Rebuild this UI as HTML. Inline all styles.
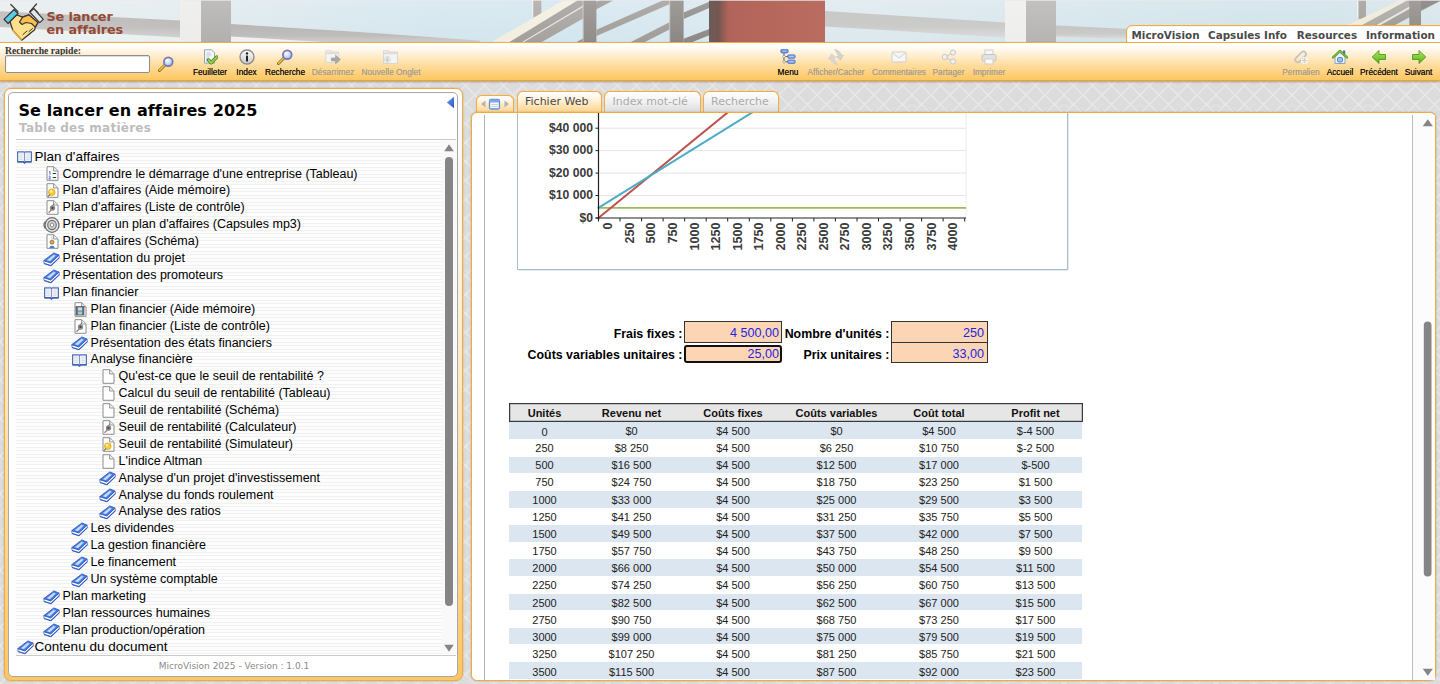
<!DOCTYPE html>
<html lang="fr"><head><meta charset="utf-8"><title>Se lancer en affaires 2025</title>
<style>
*{box-sizing:border-box}
html,body{margin:0;padding:0;width:1440px;height:684px;overflow:hidden}
body{background:#dcdcdc;font-family:"Liberation Sans",sans-serif;position:relative}
.abs{position:absolute}
svg{display:block}
#bg{left:0;top:0;width:1440px;height:684px}
#banner{left:0;top:0;width:1440px;height:43px;overflow:hidden}
#logo1,#logo2{left:46.5px;font:bold 12.8px/14px "DejaVu Sans","Liberation Sans",sans-serif;color:#954935;white-space:nowrap;letter-spacing:-.1px}
#logo1{top:9.700px}#logo2{top:22.700px}
#topmenu{left:1126px;top:25px;width:320px;height:19px;background:#fff;border:1px solid #f5a93b;border-radius:6px 0 0 0;box-shadow:inset 0 0 1px #f5a93b}
#topmenu span{position:absolute;top:2.5px;font:bold 10.4px/13px "DejaVu Sans","Liberation Sans",sans-serif;color:#444;white-space:nowrap}
#toolbar{left:0;top:42px;width:1440px;height:39px;border-top:1px solid #f6ab3c;border-bottom:1px solid #f5a21e;background:linear-gradient(#fff 0%,#fff 6%,#fff0d6 30%,#fedc9e 60%,#fdc761 100%);box-shadow:0 1px 2px rgba(0,0,0,.3)}
#qs{left:5px;top:44.5px;font:bold 9.7px/11px "Liberation Serif",serif;color:#333;white-space:nowrap}
#qsin{left:5px;top:55px;width:145px;height:18px;background:#fff;border:1px solid #8e8e8e;border-radius:2px;box-shadow:inset 0 1px 1px rgba(0,0,0,.15)}
.tb{position:absolute;top:67px;font:8.3px/10px "Liberation Sans",sans-serif;color:#111;white-space:nowrap;transform:translateX(-50%);text-shadow:0 0 .6px rgba(0,0,0,.8)}
.tb.dis{color:#a5a199;text-shadow:0 0 .5px rgba(150,140,125,.7)}
.ti{position:absolute;top:49px;width:16px;height:16px;transform:translateX(-50%)}
/* left panel */
#lp{left:4px;top:88px;width:459px;height:593px;border:1px solid #f6a93a;border-radius:7px;background:linear-gradient(#fff 0%,#fff6e6 25%,#fee3b0 60%,#fdc763 100%);box-shadow:0 0 2px rgba(120,120,120,.5)}
#lpi{left:8px;top:92px;width:450px;height:585px;border:1px solid #a9a9a9;border-radius:5px;background:#fff;overflow:hidden}
#ttl{left:18.400px;top:100.700px;font:bold 16px/20px "DejaVu Sans","Liberation Sans",sans-serif;color:#000;white-space:nowrap;letter-spacing:.1px}
#sub{left:19px;top:121px;font:bold 12px/14px "DejaVu Sans","Liberation Sans",sans-serif;color:#bdbdbd;white-space:nowrap;letter-spacing:.25px}
#stripes{left:16px;top:140px;width:426px;height:514px;background:repeating-linear-gradient(#fdfdfd 0,#fdfdfd 2.200px,#f1f1f1 2.200px,#f1f1f1 3.500px)}
#sbar{left:442px;top:140px;width:15px;height:514px;background:#f9f9f9}
.hr{left:16px;width:440px;height:1px;background:#cbcbcb}
.row{position:absolute;height:17px;line-height:17px;font-size:12.5px;color:#000;white-space:nowrap}
.row.l0{font-size:13.5px}
.ic{position:absolute}
#foot{left:10px;top:661.300px;width:448px;text-align:center;font:9px/11px "DejaVu Sans","Liberation Sans",sans-serif;color:#8a8a8a}
/* right panel */
#rp{left:471px;top:112px;width:965px;height:569px;border:1px solid #f6a93a;border-radius:6px;background:#fff;box-shadow:0 0 2px rgba(120,120,120,.5);overflow:hidden}
.tab{position:absolute;border:1px solid #f6ab3f;border-bottom:none;border-radius:6px 6px 0 0;font:11px/14px "DejaVu Sans","Liberation Sans",sans-serif;white-space:nowrap;box-shadow:0 0 1px #f6ab3f}
.tab.on{background:linear-gradient(#fff 0%,#fff3dd 35%,#fdd185 100%);color:#4a4a4a}
.tab.off{background:linear-gradient(#fff 0%,#f0f0f0 50%,#dadada 100%);color:#aaa}
.tab span{position:absolute;left:0;right:0;text-align:center}
.fld{position:absolute;background:#fcd5b4;border:1px solid #333;font-size:12.6px;color:#2424e2;text-align:right;white-space:nowrap}
.lbl{position:absolute;font:bold 12.4px/14px "Liberation Sans",sans-serif;color:#000;white-space:nowrap;text-align:right}
.th{position:absolute;top:407px;font:bold 11px/13px "Liberation Sans",sans-serif;color:#111;transform:translateX(-50%);white-space:nowrap}
.tr{position:absolute;left:509px;width:573px}
.tr.z{background:#dce6f1}
.td{position:absolute;font:11px/13px "Liberation Sans",sans-serif;color:#222;transform:translateX(-50%);white-space:nowrap}
</style></head><body>
<svg id="bg" class="abs" width="1440" height="684"><defs>
<pattern id="pt" width="38" height="38" patternUnits="userSpaceOnUse">
<rect width="38" height="38" fill="#dcdcdc"/>
<path d="M0 0L38 38M38 0L0 38M19 0L38 19M0 19L19 38M19 0L0 19M38 19L19 38" stroke="#e9e9e9" stroke-width="1.300" fill="none"/>
<path d="M0 12Q19 -6 38 12M0 28Q19 46 38 28" stroke="#e3e3e3" stroke-width="1" fill="none"/>
</pattern></defs><rect width="1440" height="684" fill="url(#pt)"/></svg>
<svg id="banner" class="abs" width="1440" height="43" viewBox="0 0 1440 43">
<defs>
<linearGradient id="sky" x1="0" x2="1"><stop offset="0" stop-color="#e4eaeb"/><stop offset=".12" stop-color="#e2ebee"/><stop offset=".26" stop-color="#d6e6ee"/><stop offset=".37" stop-color="#d2e5ef"/><stop offset=".6" stop-color="#dde9ee"/><stop offset=".75" stop-color="#d5e5ec"/><stop offset=".9" stop-color="#d0e2ea"/><stop offset="1" stop-color="#d6e4e9"/></linearGradient>
<linearGradient id="redc" x1="0" x2="1"><stop offset="0" stop-color="#6a5d5a"/><stop offset=".08" stop-color="#745650"/><stop offset=".17" stop-color="#b2645a"/><stop offset="1" stop-color="#ba6c60"/></linearGradient>
<linearGradient id="fade" x1="0" x2="0" y1="0" y2="1"><stop offset="0" stop-color="#fff" stop-opacity=".18"/><stop offset="1" stop-color="#fff" stop-opacity="0"/></linearGradient>
<linearGradient id="bm" x1="0" x2="0" y1="0" y2="1"><stop offset="0" stop-color="#b1b0af"/><stop offset=".6" stop-color="#bcbbba"/><stop offset="1" stop-color="#d2d1d0"/></linearGradient>
<linearGradient id="bm2" x1="0" x2="0" y1="0" y2="1"><stop offset="0" stop-color="#c0c0bf"/><stop offset=".6" stop-color="#c8c8c7"/><stop offset="1" stop-color="#dadbdb"/></linearGradient>
<linearGradient id="wl" x1="0" x2="1"><stop offset="0" stop-color="#fff" stop-opacity=".12"/><stop offset="1" stop-color="#fff" stop-opacity="0"/></linearGradient>
</defs>
<rect width="1440" height="43" fill="url(#sky)"/>
<rect x="0" y="26" width="180" height="17" fill="#eaf0f1"/>
<!-- left beam -->
<polygon points="0,11.300 180,20.500 180,37.500 0,27" fill="url(#bm)"/>
<polygon points="231,24 360,32 480,40.500 480,43 231,43" fill="#eef1f1"/>
<polygon points="231,24 360,32 480,40.500 480,43 340,43 231,36.500" fill="url(#bm)"/>
<!-- left column -->
<rect x="180" y="0" width="22" height="43" fill="#ecedeb"/>
<rect x="201" y="0" width="30" height="43" fill="#b1b0af"/>
<rect x="0" y="0" width="180" height="43" fill="url(#wl)"/>
<!-- structure middle -->
<rect x="532" y="0" width="1.500" height="17" fill="#eef0ee"/>
<rect x="533.300" y="0" width="8" height="17.500" fill="#aba6a3"/>
<polygon points="489.900,43 563.900,0 578.300,0 507.900,43" fill="#f3eedf"/>
<polygon points="507.900,43 578.300,0 584,0 584,5 520.600,43" fill="#a29e9a"/>
<polygon points="520.600,43 584,5 584,6.500 522.500,43" fill="#e4e1da"/>
<polygon points="522.500,43 584,6.500 584,18 540,43" fill="#a5a19d"/>
<polygon points="574.700,43 584,38 584,43" fill="#9a9692"/>
<polygon points="596,2 600,0 614,0 596,9.500" fill="#97938f"/>
<polygon points="596.400,29.800 661.400,.900 663,0 671,0 671,3.400 596.400,36.100" fill="#a09c98"/>
<polygon points="628.900,43 670.400,21.700 670.400,28.900 643,43" fill="#a09c98"/>
<polygon points="683.600,12.600 709.300,1.800 709.300,8.100 683.600,19" fill="#8d8885"/>
<polygon points="683.600,38.800 709.300,28.900 709.300,35.200 690,43 683.600,43" fill="#8d8885"/>
<rect x="582.600" y="0" width="1.200" height="43" fill="#c9c7c3"/>
<rect x="583.600" y="0" width="12.800" height="43" fill="#908b88"/>
<rect x="669.200" y="0" width="1.200" height="43" fill="#c4c1bd"/>
<rect x="670.200" y="0" width="13.400" height="43" fill="#8b8683"/>
<!-- right beam -->
<polygon points="825,11 1005,22.500 1005,37.500 825,26.500" fill="url(#bm2)"/>
<rect x="1005" y="0" width="22" height="43" fill="#eeeeec"/>
<rect x="1026" y="0" width="30" height="43" fill="#b5b4b3"/>
<polygon points="1056,25.500 1130,29 1130,39 1056,36.500" fill="url(#bm2)"/>
<!-- far right structure -->
<rect x="1357" y="0" width="1.500" height="18" fill="#f1f1ee"/>
<rect x="1358.500" y="0" width="7.500" height="19" fill="#a09c97"/>
<polygon points="1347.600,25 1401,0 1408,0 1362.200,25" fill="#efe9d9"/>
<polygon points="1362.200,25 1408,0 1421.500,0 1376.800,25" fill="#a9a6a1"/>
<polygon points="1376.800,25 1421.500,0 1425.400,0 1380.700,25" fill="#e6e3da"/>
<polygon points="1380.700,25 1425.400,0 1440,0 1440,1 1395.200,25" fill="#9b9792"/>
<rect x="1409.300" y="0" width="11.700" height="25" fill="#8d8883"/>
<polygon points="1421,0 1440,0 1440,1 1421,10" fill="#7d7975"/>
<rect x="0" y="0" width="1440" height="43" fill="url(#fade)"/>
<!-- red column -->
<rect x="709" y="0" width="116" height="43" fill="url(#redc)"/>
<rect x="0" y="0" width="1440" height="1" fill="#e9eaf0" opacity=".7"/>
</svg>
<svg class="abs" style="left:0;top:0" width="48" height="43" viewBox="0 0 48 43">
<g stroke="#3a332f" stroke-width="1.200" stroke-linejoin="round" stroke-linecap="round">
<path d="M10.800 4.500L18 11.700M36.500 4L29.800 11.700M33.800 8.600L38 12.600" fill="none"/>
<polygon points="29.800,12.200 33.800,8.600 43.300,19.400 39.700,22.600" fill="#dfe9ec"/>
<path d="M16.700 14.900L22.600 17.100L28.900 14.900L37.900 22.600L35.200 27.100L34.700 29.800L21.700 40.200L12.600 29.800L9.900 21.200Z" fill="#fde08c"/>
<path d="M22.600 17.100L28.900 14.900L37.900 22.600L35.200 27.100L31.500 23.500L26 22.500L22 24.500L19.500 22Z" fill="#f8bf4c"/>
<polygon points="4,19.400 14,9.500 18,13.500 8.100,23.500" fill="#57cbe8"/>
<path d="M23 34.500l4 -3.500M26 37l4 -3.500M29 31.500l3.500 -3" fill="none" stroke-width="1"/>
<path d="M13 30.500l8 9" fill="none" stroke="#e9a93a" stroke-width="1.800" stroke-dasharray="1.500 1.500"/>
</g></svg>
<div id="logo1" class="abs">Se lancer</div><div id="logo2" class="abs">en affaires</div>
<div id="topmenu" class="abs"></div>
<div class="abs" style="left:1131.5px;top:29px;font:bold 10.4px/13px 'DejaVu Sans','Liberation Sans',sans-serif;color:#4a4a4a;white-space:nowrap">MicroVision</div>
<div class="abs" style="left:1208px;top:29px;font:bold 10.4px/13px 'DejaVu Sans','Liberation Sans',sans-serif;color:#4a4a4a;white-space:nowrap">Capsules Info</div>
<div class="abs" style="left:1296.8px;top:29px;font:bold 10.4px/13px 'DejaVu Sans','Liberation Sans',sans-serif;color:#4a4a4a;white-space:nowrap">Resources</div>
<div class="abs" style="left:1366px;top:29px;font:bold 10.4px/13px 'DejaVu Sans','Liberation Sans',sans-serif;color:#4a4a4a;white-space:nowrap">Information</div>
<div id="toolbar" class="abs"></div>
<div id="qs" class="abs">Recherche rapide:</div><div id="qsin" class="abs"></div>
<div class="ti" style="left:166px;top:56px"><svg viewBox="0 0 16 16"><defs><radialGradient id="mg" cx=".4" cy=".35" r=".7"><stop offset="0" stop-color="#fff"/><stop offset=".6" stop-color="#bcd9f6"/><stop offset="1" stop-color="#8fb4e6"/></radialGradient></defs><path d="M1.5 14.5L8 8" stroke="#8a6a1c" stroke-width="3" stroke-linecap="round"/><path d="M1.6 14.2L7.6 8.2" stroke="#e9c84a" stroke-width="1.6" stroke-linecap="round"/><circle cx="10.3" cy="5.7" r="4.4" fill="url(#mg)" stroke="#7d74b4" stroke-width="1.7"/></svg></div>
<div class="ti" style="left:210px"><svg viewBox="0 0 16 16"><path d="M2.5 .8h7l3 3v10.4h-10z" fill="#f4f7fb" stroke="#9aa3ad" stroke-width="1"/><path d="M4.5 4h4M4.5 6h5M4.5 8h3" stroke="#b9c7dd" stroke-width="1"/><rect x="4" y="9" width="3" height="4" fill="#bcd6f2"/><path d="M6.5 11l2.7 2.8L14.8 8" fill="none" stroke="#4e8a1e" stroke-width="3.4" stroke-linecap="round" stroke-linejoin="round"/><path d="M6.5 11l2.7 2.8L14.8 8" fill="none" stroke="#9fd54a" stroke-width="1.7" stroke-linecap="round" stroke-linejoin="round"/></svg></div><div class="tb" style="left:210px">Feuilleter</div>
<div class="ti" style="left:246.5px"><svg viewBox="0 0 16 16"><defs><linearGradient id="ig" x1="0" y1="0" x2="0" y2="1"><stop offset="0" stop-color="#fff"/><stop offset="1" stop-color="#c9c9c9"/></linearGradient></defs><circle cx="8" cy="8" r="7" fill="url(#ig)" stroke="#8a8a8a" stroke-width="1.3"/><circle cx="8" cy="4.4" r="1.2" fill="#222"/><rect x="7" y="6.5" width="2" height="6" rx=".6" fill="#222"/></svg></div><div class="tb" style="left:246.5px">Index</div>
<div class="ti" style="left:285px"><svg viewBox="0 0 16 16"><defs><radialGradient id="mg" cx=".4" cy=".35" r=".7"><stop offset="0" stop-color="#fff"/><stop offset=".6" stop-color="#bcd9f6"/><stop offset="1" stop-color="#8fb4e6"/></radialGradient></defs><path d="M1.5 14.5L8 8" stroke="#8a6a1c" stroke-width="3" stroke-linecap="round"/><path d="M1.6 14.2L7.6 8.2" stroke="#e9c84a" stroke-width="1.6" stroke-linecap="round"/><circle cx="10.3" cy="5.7" r="4.4" fill="url(#mg)" stroke="#7d74b4" stroke-width="1.7"/></svg></div><div class="tb" style="left:285px">Recherche</div>
<div class="ti" style="left:333px"><svg viewBox="0 0 16 16"><path d="M.800 1.700h5.200v1.300h7.700v10.300H.800z" fill="#f5f5f5" stroke="#d2d2d2" stroke-width=".800"/><rect x="1.200" y="3.200" width="12.100" height="2" fill="#dcdcdc"/><path d="M6.300 8.900h4.200V5.900l5 4.500-5 4.500v-3H6.300z" fill="#a6a6a6" stroke="#9a9a9a" stroke-width=".500"/></svg></div><div class="tb dis" style="left:333px">Désarrimez</div>
<div class="ti" style="left:391px"><svg viewBox="0 0 16 16"><path d="M.500 1.700h5.200v1.300h8.800v11.500H.500z" fill="#f3f3f3" stroke="#d0d0d0" stroke-width=".800"/><rect x=".900" y="3.200" width="13.200" height="2" fill="#dcdcdc"/><circle cx="4.300" cy="10.400" r="3" fill="#fff" stroke="#cfcfcf" stroke-width=".800"/><path d="M3.300 8.300h2v2h1.500l-2.500 2.700-2.500-2.700h1.500z" fill="#c9c9c9"/></svg></div><div class="tb dis" style="left:391px">Nouvelle Onglet</div>
<div class="ti" style="left:788px"><svg viewBox="0 0 16 16"><path d="M4 4v8.800H8M4 7.500H8" fill="none" stroke="#6a6a6a" stroke-width="1.100"/><rect x=".800" y=".400" width="7.400" height="3.600" rx="1.200" fill="#6c95e6" stroke="#4468c4" stroke-width=".700"/><rect x="7.600" y="5.800" width="7.600" height="3.500" rx="1.200" fill="#7da3ec" stroke="#4a6fc8" stroke-width=".700"/><rect x="7.600" y="11" width="7.600" height="3.500" rx="1.200" fill="#7da3ec" stroke="#4a6fc8" stroke-width=".700"/><path d="M2.300 2.200h4.400M9.300 7.500h4.200M9.300 12.700h4.200" stroke="#b9d0f7" stroke-width=".900"/><circle cx="4" cy="7.500" r="1.300" fill="#fff" stroke="#8a8a8a" stroke-width=".700"/><circle cx="4" cy="12.800" r="1.300" fill="#fff" stroke="#8a8a8a" stroke-width=".700"/></svg></div><div class="tb" style="left:788px">Menu</div>
<div class="ti" style="left:836px"><svg viewBox="0 0 16 16"><path id="afa" d="M6.500 .500C10 1 13 3.500 13.500 6.500L15.600 6 12.500 11 8.400 7.600 10.500 7.200C10 5 8.500 3 6.500 .500z" fill="#d2d2d2" stroke="#bdbdbd" stroke-width=".500"/><path d="M9.500 15.500C6 15 3 12.500 2.500 9.500L.400 10 3.500 5 7.600 8.400 5.500 8.800C6 11 7.500 13 9.500 15.500z" fill="#d8d8d8" stroke="#c0c0c0" stroke-width=".500"/></svg></div><div class="tb dis" style="left:836px">Afficher/Cacher</div>
<div class="ti" style="left:899px"><svg viewBox="0 0 16 16"><rect x="1" y="3" width="14" height="10" rx="1" fill="#f6f6f6" stroke="#cfcfcf"/><path d="M1.5 3.8L8 9l6.5-5.2" fill="none" stroke="#cfcfcf"/></svg></div><div class="tb dis" style="left:899px">Commentaires</div>
<div class="ti" style="left:948.5px"><svg viewBox="0 0 16 16"><path d="M4 8L12 3.5M4 8l8 4.5" stroke="#cfcfcf" stroke-width="1.2"/><circle cx="3.8" cy="8" r="2.6" fill="#efefef" stroke="#c6c6c6"/><circle cx="12" cy="3.5" r="2.6" fill="#efefef" stroke="#c6c6c6"/><circle cx="12" cy="12.5" r="2.6" fill="#efefef" stroke="#c6c6c6"/></svg></div><div class="tb dis" style="left:948.5px">Partager</div>
<div class="ti" style="left:989px"><svg viewBox="0 0 16 16"><rect x="4" y="1" width="8" height="5" fill="#f7f7f7" stroke="#cfcfcf"/><rect x="1" y="5.5" width="14" height="6.5" rx="1.5" fill="#e2e2e2" stroke="#c4c4c4"/><rect x="4" y="10" width="8" height="5" fill="#fafafa" stroke="#cfcfcf"/></svg></div><div class="tb dis" style="left:989px">Imprimer</div>
<div class="ti" style="left:1301px"><svg viewBox="0 0 16 16"><path d="M3 12.5a2.6 2.6 0 0 1 0-3.7l5.5-5.5a2.6 2.6 0 0 1 3.7 3.7L6.700 12.5a2.600 2.600 0 0 1-3.700 0z" fill="none" stroke="#c3c3c3" stroke-width="1.8"/><path d="M11.500 8v7M8 11.500h7" stroke="#fff" stroke-width="3.400"/><path d="M11.500 8.500v6M8.500 11.500h6" stroke="#cfcfcf" stroke-width="1.700"/></svg></div><div class="tb dis" style="left:1301px">Permalien</div>
<div class="ti" style="left:1340px"><svg viewBox="0 0 16 16"><rect x="11" y="1.500" width="2.200" height="4" fill="#3f6fd0"/><path d="M3 8v6.500h10V8L8 3.500z" fill="#eef3fb" stroke="#7a8fb8" stroke-width=".8"/><path d="M.8 8.600L8 1.800l7.200 6.800" fill="none" stroke="#4f9a1f" stroke-width="2.200" stroke-linejoin="round" stroke-linecap="round"/><path d="M.8 8.600L8 1.800l7.200 6.800" fill="none" stroke="#8fd048" stroke-width="1" stroke-linejoin="round" stroke-linecap="round"/><rect x="5.500" y="8.500" width="5" height="4.500" rx="1.200" fill="#9cc3f3" stroke="#4a79c8" stroke-width=".9"/></svg></div><div class="tb" style="left:1340px">Accueil</div>
<div class="ti" style="left:1379px"><svg viewBox="0 0 16 16"><defs><linearGradient id="gg" x1="0" y1="0" x2="0" y2="1"><stop offset="0" stop-color="#b5ec5a"/><stop offset="1" stop-color="#4fae1c"/></linearGradient></defs><path d="M1.200 8L8 1.500V5.500h6.500v5H8v4z" fill="url(#gg)" stroke="#4a9a1e" stroke-width=".9" stroke-linejoin="round"/></svg></div><div class="tb" style="left:1379px">Précédent</div>
<div class="ti" style="left:1418.5px"><svg viewBox="0 0 16 16"><path d="M14.800 8L8 1.500V5.500H1.500v5H8v4z" fill="url(#gg)" stroke="#4a9a1e" stroke-width=".9" stroke-linejoin="round"/></svg></div><div class="tb" style="left:1418.5px">Suivant</div>
<div id="lp" class="abs"></div><div id="lpi" class="abs"></div>
<div id="ttl" class="abs">Se lancer en affaires 2025</div><div id="sub" class="abs">Table des matières</div>
<svg class="abs" style="left:446px;top:96px" width="9" height="13" viewBox="0 0 9 13"><defs><linearGradient id="bt" x1="0" y1="0" x2="1" y2="1"><stop offset="0" stop-color="#6fa0ee"/><stop offset="1" stop-color="#2a55c8"/></linearGradient></defs><path d="M8 .8V12.200L.800 6.500z" fill="url(#bt)"/></svg>
<div class="abs hr" style="top:139px"></div><div id="stripes" class="abs"></div><div id="sbar" class="abs"></div><div class="abs hr" style="top:655px"></div>
<svg class="abs" style="left:442px;top:140px" width="15" height="514" viewBox="0 0 15 514"><path d="M2.200 11.200L7 4.300l4.800 6.900z" fill="#858585"/><rect x="3" y="17" width="8" height="449" rx="4" fill="#858585"/><path d="M2.200 504.800h9.600L7 511.700z" fill="#858585"/></svg>
<div class="ic" style="left:17.0px;top:151.3px"><svg width="16" height="13" viewBox="0 0 16 13"><path d="M.600 .800h6l.900 .700 .900-.700h6v10H8.800L7.500 11.900 6.200 10.800H.600z" fill="#f3f5f9" stroke="#4f72b8" stroke-width="1.200" stroke-linejoin="round"/><path d="M.600 10.800h5.600l1.300 1.100 1.300-1.100h5.600" fill="none" stroke="#3f62ac" stroke-width="1.500"/><path d="M7.500 1.800v9" stroke="#7f98c8" stroke-width="1.100"/><path d="M2.300 3h3.400M2.300 4.800h3.400M2.300 6.600h3.400M2.300 8.400h3.400M9.300 3h3.400M9.300 4.800h3.400M9.300 6.600h3.400M9.300 8.400h3.400" stroke="#cfd5df" stroke-width=".800"/></svg></div><div class="row l0" style="left:34.6px;top:147.6px">Plan d'affaires</div>
<div class="ic" style="left:45.9px;top:166.4px"><svg width="13" height="15" viewBox="0 0 13 15"><path d="M1 .7h6.800L12 4.800V14.300H1z" fill="#fff" stroke="#8c8c8c" stroke-width="1"/><path d="M7.600 .9v4.100h4.200" fill="#f2f2f2" stroke="#8c8c8c" stroke-width=".9"/><path d="M6.800 7.500h3.400M6.800 11.500h3.400" stroke="#333" stroke-width="1.100"/><path d="M3 6.200l1-.7v3.300M2.800 10.500c1.800-.8 2 .6 0 2.400h2" fill="none" stroke="#2f5fd0" stroke-width=".9"/></svg></div><div class="row l1" style="left:62.6px;top:165.5px">Comprendre le démarrage d'une entreprise (Tableau)</div>
<div class="ic" style="left:45.9px;top:183.3px"><svg width="13" height="15" viewBox="0 0 13 15"><path d="M1 .7h6.800L12 4.800V14.300H1z" fill="#fff" stroke="#8c8c8c" stroke-width="1"/><path d="M7.600 .9v4.100h4.200" fill="#f2f2f2" stroke="#8c8c8c" stroke-width=".9"/><circle cx="5.800" cy="9.200" r="3.300" fill="#f6cf3a" stroke="#d9a514" stroke-width=".8"/><circle cx="5" cy="8.300" r="1.200" fill="#fdf0a6"/><path d="M2 13.500l2-2" stroke="#777" stroke-width="1.300"/></svg></div><div class="row l1" style="left:62.6px;top:182.4px">Plan d'affaires (Aide mémoire)</div>
<div class="ic" style="left:45.9px;top:200.2px"><svg width="13" height="15" viewBox="0 0 13 15"><path d="M1 .7h6.800L12 4.800V14.300H1z" fill="#fff" stroke="#8c8c8c" stroke-width="1"/><path d="M7.600 .9v4.100h4.200" fill="#f2f2f2" stroke="#8c8c8c" stroke-width=".9"/><circle cx="6.500" cy="8" r="2.700" fill="#8a8a8a"/><circle cx="6.500" cy="8" r="1.100" fill="#444"/><path d="M2.500 12.800l3-3" stroke="#b07a7a" stroke-width="1.300"/><path d="M6 6.500l2-3" stroke="#777" stroke-width="1"/></svg></div><div class="row l1" style="left:62.6px;top:199.3px">Plan d'affaires (Liste de contrôle)</div>
<div class="ic" style="left:43.1px;top:217.4px"><svg width="17" height="16" viewBox="0 0 17 16"><ellipse cx="9" cy="8" rx="7" ry="7.300" fill="#e9e9e9" stroke="#6e6e6e" stroke-width="1.300"/><ellipse cx="9" cy="8" rx="4.300" ry="4.600" fill="#cfcfcf" stroke="#6e6e6e" stroke-width="1.100"/><ellipse cx="9" cy="8" rx="1.700" ry="1.900" fill="#fafafa" stroke="#777" stroke-width=".8"/><path d="M2.500 4.500C.800 6.500 .800 9.500 2.500 11.500" fill="none" stroke="#6e6e6e" stroke-width="1.300"/></svg></div><div class="row l1" style="left:62.6px;top:216.2px">Préparer un plan d'affaires (Capsules mp3)</div>
<div class="ic" style="left:45.9px;top:234.0px"><svg width="13" height="15" viewBox="0 0 13 15"><path d="M1 .7h6.800L12 4.800V14.300H1z" fill="#fff" stroke="#8c8c8c" stroke-width="1"/><path d="M7.600 .9v4.100h4.200" fill="#f2f2f2" stroke="#8c8c8c" stroke-width=".9"/><circle cx="6" cy="8.200" r="2" fill="#e8a64c" stroke="#6b4a1e" stroke-width=".6"/><path d="M3.500 14c0-3 5-3 5 0z" fill="#3f7fd8"/><path d="M6 2.500v3" stroke="#888" stroke-width=".8" stroke-dasharray="1 1"/></svg></div><div class="row l1" style="left:62.6px;top:233.1px">Plan d'affaires (Schéma)</div>
<div class="ic" style="left:43.0px;top:251.7px"><svg width="17" height="15" viewBox="0 0 17 15"><path d="M.800 8.600L7.800 10.800 16.100 3.100 16.400 5.700 8 13.600 1 11.400z" fill="#fafaf8" stroke="#2f58bc" stroke-width=".700" stroke-linejoin="round"/><path d="M.800 8.600L10.900 .900 16.100 3.100 7.800 10.800z" fill="#4a78e2" stroke="#2d55b8" stroke-width=".800" stroke-linejoin="round"/><path d="M3.600 8.300L10.700 2.600 13 3.600 7 9.300z" fill="#a8cbf8"/><path d="M5 8.200L10.500 3.600 11.500 4 6.500 8.700z" fill="#cfe3fb"/><path d="M1 11.500L8 13.700 16.400 5.700" fill="none" stroke="#3560c8" stroke-width="1.100" stroke-linejoin="round"/></svg></div><div class="row l1" style="left:62.6px;top:250.0px">Présentation du projet</div>
<div class="ic" style="left:43.0px;top:268.6px"><svg width="17" height="15" viewBox="0 0 17 15"><path d="M.800 8.600L7.800 10.800 16.100 3.100 16.400 5.700 8 13.600 1 11.400z" fill="#fafaf8" stroke="#2f58bc" stroke-width=".700" stroke-linejoin="round"/><path d="M.800 8.600L10.900 .900 16.100 3.100 7.800 10.800z" fill="#4a78e2" stroke="#2d55b8" stroke-width=".800" stroke-linejoin="round"/><path d="M3.600 8.300L10.700 2.600 13 3.600 7 9.300z" fill="#a8cbf8"/><path d="M5 8.200L10.500 3.600 11.500 4 6.500 8.700z" fill="#cfe3fb"/><path d="M1 11.500L8 13.700 16.400 5.700" fill="none" stroke="#3560c8" stroke-width="1.100" stroke-linejoin="round"/></svg></div><div class="row l1" style="left:62.6px;top:266.9px">Présentation des promoteurs</div>
<div class="ic" style="left:44.0px;top:286.5px"><svg width="16" height="13" viewBox="0 0 16 13"><path d="M.600 .800h6l.900 .700 .900-.700h6v10H8.800L7.500 11.900 6.200 10.800H.600z" fill="#f3f5f9" stroke="#4f72b8" stroke-width="1.200" stroke-linejoin="round"/><path d="M.600 10.800h5.600l1.300 1.100 1.300-1.100h5.600" fill="none" stroke="#3f62ac" stroke-width="1.500"/><path d="M7.500 1.800v9" stroke="#7f98c8" stroke-width="1.100"/><path d="M2.300 3h3.400M2.300 4.800h3.400M2.300 6.600h3.400M2.300 8.400h3.400M9.300 3h3.400M9.300 4.800h3.400M9.300 6.600h3.400M9.300 8.400h3.400" stroke="#cfd5df" stroke-width=".800"/></svg></div><div class="row l1" style="left:62.6px;top:283.8px">Plan financier</div>
<div class="ic" style="left:73.9px;top:301.6px"><svg width="13" height="15" viewBox="0 0 13 15"><path d="M1 .7h6.800L12 4.800V14.300H1z" fill="#fff" stroke="#8c8c8c" stroke-width="1"/><path d="M7.600 .9v4.100h4.200" fill="#f2f2f2" stroke="#8c8c8c" stroke-width=".9"/><rect x="2" y="4.500" width="8" height="8.500" fill="#6f7a86" stroke="#444" stroke-width=".6"/><rect x="4" y="5.500" width="4" height="3" fill="#bfe0ea"/><rect x="4" y="9.500" width="4" height="3" fill="#9fd0c8"/></svg></div><div class="row l2" style="left:90.6px;top:300.7px">Plan financier (Aide mémoire)</div>
<div class="ic" style="left:73.9px;top:318.5px"><svg width="13" height="15" viewBox="0 0 13 15"><path d="M1 .7h6.800L12 4.800V14.300H1z" fill="#fff" stroke="#8c8c8c" stroke-width="1"/><path d="M7.600 .9v4.100h4.200" fill="#f2f2f2" stroke="#8c8c8c" stroke-width=".9"/><circle cx="6.500" cy="8" r="2.700" fill="#8a8a8a"/><circle cx="6.500" cy="8" r="1.100" fill="#444"/><path d="M2.500 12.800l3-3" stroke="#b07a7a" stroke-width="1.300"/><path d="M6 6.500l2-3" stroke="#777" stroke-width="1"/></svg></div><div class="row l2" style="left:90.6px;top:317.6px">Plan financier (Liste de contrôle)</div>
<div class="ic" style="left:71.0px;top:336.2px"><svg width="17" height="15" viewBox="0 0 17 15"><path d="M.800 8.600L7.800 10.800 16.100 3.100 16.400 5.700 8 13.600 1 11.400z" fill="#fafaf8" stroke="#2f58bc" stroke-width=".700" stroke-linejoin="round"/><path d="M.800 8.600L10.900 .900 16.100 3.100 7.800 10.800z" fill="#4a78e2" stroke="#2d55b8" stroke-width=".800" stroke-linejoin="round"/><path d="M3.600 8.300L10.700 2.600 13 3.600 7 9.300z" fill="#a8cbf8"/><path d="M5 8.200L10.500 3.600 11.500 4 6.500 8.700z" fill="#cfe3fb"/><path d="M1 11.500L8 13.700 16.400 5.700" fill="none" stroke="#3560c8" stroke-width="1.100" stroke-linejoin="round"/></svg></div><div class="row l2" style="left:90.6px;top:334.5px">Présentation des états financiers</div>
<div class="ic" style="left:72.0px;top:354.1px"><svg width="16" height="13" viewBox="0 0 16 13"><path d="M.600 .800h6l.900 .700 .900-.700h6v10H8.800L7.500 11.900 6.200 10.800H.600z" fill="#f3f5f9" stroke="#4f72b8" stroke-width="1.200" stroke-linejoin="round"/><path d="M.600 10.800h5.600l1.300 1.100 1.300-1.100h5.600" fill="none" stroke="#3f62ac" stroke-width="1.500"/><path d="M7.500 1.800v9" stroke="#7f98c8" stroke-width="1.100"/><path d="M2.300 3h3.400M2.300 4.800h3.400M2.300 6.600h3.400M2.300 8.400h3.400M9.300 3h3.400M9.300 4.800h3.400M9.300 6.600h3.400M9.300 8.400h3.400" stroke="#cfd5df" stroke-width=".800"/></svg></div><div class="row l2" style="left:90.6px;top:351.4px">Analyse financière</div>
<div class="ic" style="left:101.9px;top:369.2px"><svg width="13" height="15" viewBox="0 0 13 15"><path d="M1 .7h6.800L12 4.800V14.300H1z" fill="#fff" stroke="#8c8c8c" stroke-width="1"/><path d="M7.600 .9v4.100h4.200" fill="#f2f2f2" stroke="#8c8c8c" stroke-width=".9"/></svg></div><div class="row l3" style="left:118.6px;top:368.3px">Qu'est-ce que le seuil de rentabilité ?</div>
<div class="ic" style="left:101.9px;top:386.1px"><svg width="13" height="15" viewBox="0 0 13 15"><path d="M1 .7h6.800L12 4.800V14.300H1z" fill="#fff" stroke="#8c8c8c" stroke-width="1"/><path d="M7.600 .9v4.100h4.200" fill="#f2f2f2" stroke="#8c8c8c" stroke-width=".9"/></svg></div><div class="row l3" style="left:118.6px;top:385.2px">Calcul du seuil de rentabilité (Tableau)</div>
<div class="ic" style="left:101.9px;top:403.0px"><svg width="13" height="15" viewBox="0 0 13 15"><path d="M1 .7h6.800L12 4.800V14.300H1z" fill="#fff" stroke="#8c8c8c" stroke-width="1"/><path d="M7.600 .9v4.100h4.200" fill="#f2f2f2" stroke="#8c8c8c" stroke-width=".9"/></svg></div><div class="row l3" style="left:118.6px;top:402.1px">Seuil de rentabilité (Schéma)</div>
<div class="ic" style="left:101.9px;top:419.9px"><svg width="13" height="15" viewBox="0 0 13 15"><path d="M1 .7h6.800L12 4.800V14.300H1z" fill="#fff" stroke="#8c8c8c" stroke-width="1"/><path d="M7.600 .9v4.100h4.200" fill="#f2f2f2" stroke="#8c8c8c" stroke-width=".9"/><circle cx="6.500" cy="8" r="2.700" fill="#8a8a8a"/><circle cx="6.500" cy="8" r="1.100" fill="#444"/><path d="M2.500 12.800l3-3" stroke="#b07a7a" stroke-width="1.300"/><path d="M6 6.500l2-3" stroke="#777" stroke-width="1"/></svg></div><div class="row l3" style="left:118.6px;top:419.0px">Seuil de rentabilité (Calculateur)</div>
<div class="ic" style="left:101.9px;top:436.7px"><svg width="13" height="15" viewBox="0 0 13 15"><path d="M1 .7h6.800L12 4.800V14.300H1z" fill="#fff" stroke="#8c8c8c" stroke-width="1"/><path d="M7.600 .9v4.100h4.200" fill="#f2f2f2" stroke="#8c8c8c" stroke-width=".9"/><circle cx="5.800" cy="9.200" r="3.300" fill="#f6cf3a" stroke="#d9a514" stroke-width=".8"/><circle cx="5" cy="8.300" r="1.200" fill="#fdf0a6"/><path d="M2 13.500l2-2" stroke="#777" stroke-width="1.300"/></svg></div><div class="row l3" style="left:118.6px;top:435.8px">Seuil de rentabilité (Simulateur)</div>
<div class="ic" style="left:101.9px;top:453.6px"><svg width="13" height="15" viewBox="0 0 13 15"><path d="M1 .7h6.800L12 4.800V14.300H1z" fill="#fff" stroke="#8c8c8c" stroke-width="1"/><path d="M7.600 .9v4.100h4.200" fill="#f2f2f2" stroke="#8c8c8c" stroke-width=".9"/></svg></div><div class="row l3" style="left:118.6px;top:452.7px">L'indice Altman</div>
<div class="ic" style="left:99.0px;top:471.3px"><svg width="17" height="15" viewBox="0 0 17 15"><path d="M.800 8.600L7.800 10.800 16.100 3.100 16.400 5.700 8 13.600 1 11.400z" fill="#fafaf8" stroke="#2f58bc" stroke-width=".700" stroke-linejoin="round"/><path d="M.800 8.600L10.900 .900 16.100 3.100 7.800 10.800z" fill="#4a78e2" stroke="#2d55b8" stroke-width=".800" stroke-linejoin="round"/><path d="M3.600 8.300L10.700 2.600 13 3.600 7 9.300z" fill="#a8cbf8"/><path d="M5 8.200L10.500 3.600 11.500 4 6.500 8.700z" fill="#cfe3fb"/><path d="M1 11.500L8 13.700 16.400 5.700" fill="none" stroke="#3560c8" stroke-width="1.100" stroke-linejoin="round"/></svg></div><div class="row l3" style="left:118.6px;top:469.6px">Analyse d'un projet d'investissement</div>
<div class="ic" style="left:99.0px;top:488.2px"><svg width="17" height="15" viewBox="0 0 17 15"><path d="M.800 8.600L7.800 10.800 16.100 3.100 16.400 5.700 8 13.600 1 11.400z" fill="#fafaf8" stroke="#2f58bc" stroke-width=".700" stroke-linejoin="round"/><path d="M.800 8.600L10.900 .900 16.100 3.100 7.800 10.800z" fill="#4a78e2" stroke="#2d55b8" stroke-width=".800" stroke-linejoin="round"/><path d="M3.600 8.300L10.700 2.600 13 3.600 7 9.300z" fill="#a8cbf8"/><path d="M5 8.200L10.500 3.600 11.500 4 6.500 8.700z" fill="#cfe3fb"/><path d="M1 11.500L8 13.700 16.400 5.700" fill="none" stroke="#3560c8" stroke-width="1.100" stroke-linejoin="round"/></svg></div><div class="row l3" style="left:118.6px;top:486.5px">Analyse du fonds roulement</div>
<div class="ic" style="left:99.0px;top:505.1px"><svg width="17" height="15" viewBox="0 0 17 15"><path d="M.800 8.600L7.800 10.800 16.100 3.100 16.400 5.700 8 13.600 1 11.400z" fill="#fafaf8" stroke="#2f58bc" stroke-width=".700" stroke-linejoin="round"/><path d="M.800 8.600L10.900 .900 16.100 3.100 7.800 10.800z" fill="#4a78e2" stroke="#2d55b8" stroke-width=".800" stroke-linejoin="round"/><path d="M3.600 8.300L10.700 2.600 13 3.600 7 9.300z" fill="#a8cbf8"/><path d="M5 8.200L10.500 3.600 11.500 4 6.500 8.700z" fill="#cfe3fb"/><path d="M1 11.500L8 13.700 16.400 5.700" fill="none" stroke="#3560c8" stroke-width="1.100" stroke-linejoin="round"/></svg></div><div class="row l3" style="left:118.6px;top:503.4px">Analyse des ratios</div>
<div class="ic" style="left:71.0px;top:522.0px"><svg width="17" height="15" viewBox="0 0 17 15"><path d="M.800 8.600L7.800 10.800 16.100 3.100 16.400 5.700 8 13.600 1 11.400z" fill="#fafaf8" stroke="#2f58bc" stroke-width=".700" stroke-linejoin="round"/><path d="M.800 8.600L10.900 .900 16.100 3.100 7.800 10.800z" fill="#4a78e2" stroke="#2d55b8" stroke-width=".800" stroke-linejoin="round"/><path d="M3.600 8.300L10.700 2.600 13 3.600 7 9.300z" fill="#a8cbf8"/><path d="M5 8.200L10.500 3.600 11.500 4 6.500 8.700z" fill="#cfe3fb"/><path d="M1 11.500L8 13.700 16.400 5.700" fill="none" stroke="#3560c8" stroke-width="1.100" stroke-linejoin="round"/></svg></div><div class="row l2" style="left:90.6px;top:520.3px">Les dividendes</div>
<div class="ic" style="left:71.0px;top:538.9px"><svg width="17" height="15" viewBox="0 0 17 15"><path d="M.800 8.600L7.800 10.800 16.100 3.100 16.400 5.700 8 13.600 1 11.400z" fill="#fafaf8" stroke="#2f58bc" stroke-width=".700" stroke-linejoin="round"/><path d="M.800 8.600L10.900 .900 16.100 3.100 7.800 10.800z" fill="#4a78e2" stroke="#2d55b8" stroke-width=".800" stroke-linejoin="round"/><path d="M3.600 8.300L10.700 2.600 13 3.600 7 9.300z" fill="#a8cbf8"/><path d="M5 8.200L10.500 3.600 11.500 4 6.500 8.700z" fill="#cfe3fb"/><path d="M1 11.500L8 13.700 16.400 5.700" fill="none" stroke="#3560c8" stroke-width="1.100" stroke-linejoin="round"/></svg></div><div class="row l2" style="left:90.6px;top:537.2px">La gestion financière</div>
<div class="ic" style="left:71.0px;top:555.8px"><svg width="17" height="15" viewBox="0 0 17 15"><path d="M.800 8.600L7.800 10.800 16.100 3.100 16.400 5.700 8 13.600 1 11.400z" fill="#fafaf8" stroke="#2f58bc" stroke-width=".700" stroke-linejoin="round"/><path d="M.800 8.600L10.900 .900 16.100 3.100 7.800 10.800z" fill="#4a78e2" stroke="#2d55b8" stroke-width=".800" stroke-linejoin="round"/><path d="M3.600 8.300L10.700 2.600 13 3.600 7 9.300z" fill="#a8cbf8"/><path d="M5 8.200L10.500 3.600 11.500 4 6.500 8.700z" fill="#cfe3fb"/><path d="M1 11.500L8 13.700 16.400 5.700" fill="none" stroke="#3560c8" stroke-width="1.100" stroke-linejoin="round"/></svg></div><div class="row l2" style="left:90.6px;top:554.1px">Le financement</div>
<div class="ic" style="left:71.0px;top:572.7px"><svg width="17" height="15" viewBox="0 0 17 15"><path d="M.800 8.600L7.800 10.800 16.100 3.100 16.400 5.700 8 13.600 1 11.400z" fill="#fafaf8" stroke="#2f58bc" stroke-width=".700" stroke-linejoin="round"/><path d="M.800 8.600L10.900 .900 16.100 3.100 7.800 10.800z" fill="#4a78e2" stroke="#2d55b8" stroke-width=".800" stroke-linejoin="round"/><path d="M3.600 8.300L10.700 2.600 13 3.600 7 9.300z" fill="#a8cbf8"/><path d="M5 8.200L10.500 3.600 11.500 4 6.500 8.700z" fill="#cfe3fb"/><path d="M1 11.500L8 13.700 16.400 5.700" fill="none" stroke="#3560c8" stroke-width="1.100" stroke-linejoin="round"/></svg></div><div class="row l2" style="left:90.6px;top:571.0px">Un système comptable</div>
<div class="ic" style="left:43.0px;top:589.6px"><svg width="17" height="15" viewBox="0 0 17 15"><path d="M.800 8.600L7.800 10.800 16.100 3.100 16.400 5.700 8 13.600 1 11.400z" fill="#fafaf8" stroke="#2f58bc" stroke-width=".700" stroke-linejoin="round"/><path d="M.800 8.600L10.900 .900 16.100 3.100 7.800 10.800z" fill="#4a78e2" stroke="#2d55b8" stroke-width=".800" stroke-linejoin="round"/><path d="M3.600 8.300L10.700 2.600 13 3.600 7 9.300z" fill="#a8cbf8"/><path d="M5 8.200L10.500 3.600 11.500 4 6.500 8.700z" fill="#cfe3fb"/><path d="M1 11.500L8 13.700 16.400 5.700" fill="none" stroke="#3560c8" stroke-width="1.100" stroke-linejoin="round"/></svg></div><div class="row l1" style="left:62.6px;top:587.9px">Plan marketing</div>
<div class="ic" style="left:43.0px;top:606.5px"><svg width="17" height="15" viewBox="0 0 17 15"><path d="M.800 8.600L7.800 10.800 16.100 3.100 16.400 5.700 8 13.600 1 11.400z" fill="#fafaf8" stroke="#2f58bc" stroke-width=".700" stroke-linejoin="round"/><path d="M.800 8.600L10.900 .900 16.100 3.100 7.800 10.800z" fill="#4a78e2" stroke="#2d55b8" stroke-width=".800" stroke-linejoin="round"/><path d="M3.600 8.300L10.700 2.600 13 3.600 7 9.300z" fill="#a8cbf8"/><path d="M5 8.200L10.500 3.600 11.500 4 6.500 8.700z" fill="#cfe3fb"/><path d="M1 11.500L8 13.700 16.400 5.700" fill="none" stroke="#3560c8" stroke-width="1.100" stroke-linejoin="round"/></svg></div><div class="row l1" style="left:62.6px;top:604.8px">Plan ressources humaines</div>
<div class="ic" style="left:43.0px;top:623.4px"><svg width="17" height="15" viewBox="0 0 17 15"><path d="M.800 8.600L7.800 10.800 16.100 3.100 16.400 5.700 8 13.600 1 11.400z" fill="#fafaf8" stroke="#2f58bc" stroke-width=".700" stroke-linejoin="round"/><path d="M.800 8.600L10.900 .900 16.100 3.100 7.800 10.800z" fill="#4a78e2" stroke="#2d55b8" stroke-width=".800" stroke-linejoin="round"/><path d="M3.600 8.300L10.700 2.600 13 3.600 7 9.300z" fill="#a8cbf8"/><path d="M5 8.200L10.500 3.600 11.500 4 6.500 8.700z" fill="#cfe3fb"/><path d="M1 11.500L8 13.700 16.400 5.700" fill="none" stroke="#3560c8" stroke-width="1.100" stroke-linejoin="round"/></svg></div><div class="row l1" style="left:62.6px;top:621.7px">Plan production/opération</div>
<div class="ic" style="left:16.7px;top:640.3px"><svg width="17" height="15" viewBox="0 0 17 15"><path d="M.800 8.600L7.800 10.800 16.100 3.100 16.400 5.700 8 13.600 1 11.400z" fill="#fafaf8" stroke="#2f58bc" stroke-width=".700" stroke-linejoin="round"/><path d="M.800 8.600L10.900 .900 16.100 3.100 7.800 10.800z" fill="#4a78e2" stroke="#2d55b8" stroke-width=".800" stroke-linejoin="round"/><path d="M3.600 8.300L10.700 2.600 13 3.600 7 9.300z" fill="#a8cbf8"/><path d="M5 8.200L10.500 3.600 11.500 4 6.500 8.700z" fill="#cfe3fb"/><path d="M1 11.500L8 13.700 16.400 5.700" fill="none" stroke="#3560c8" stroke-width="1.100" stroke-linejoin="round"/></svg></div><div class="row l0" style="left:34.6px;top:637.6px">Contenu du document</div>
<div id="foot" class="abs">MicroVision 2025 - Version : 1.0.1</div>
<div class="tab on" style="left:476px;top:95px;width:38px;height:18px"></div>
<svg class="abs" style="left:479px;top:97px" width="32" height="14" viewBox="0 0 32 14"><path d="M6.500 3.500v7L2 7z" fill="#b4b4b4"/><path d="M25.500 3.500v7L30 7z" fill="#b4b4b4"/><rect x="10.500" y="2.500" width="10" height="9.500" rx="1.500" fill="#f4f8fd" stroke="#5f8fdc" stroke-width="1.300"/><rect x="10.500" y="2.500" width="10" height="3" rx="1" fill="#7fa8e8"/><path d="M12 7.500h7M12 9.500h7" stroke="#c2c9d4" stroke-width=".8"/></svg>
<div class="tab on" style="left:517px;top:91px;width:85px;height:22px"><span style="top:3px;left:7px;text-align:left">Fichier Web</span></div>
<div class="tab off" style="left:604px;top:91px;width:97px;height:22px"><span style="top:3px;left:7.500px;text-align:left">Index mot-clé</span></div>
<div class="tab off" style="left:703px;top:91px;width:76px;height:22px"><span style="top:3px;left:7px;text-align:left">Recherche</span></div>
<div id="rp" class="abs"></div>
<div class="abs" style="left:483.5px;top:115px;width:1px;height:565px;background:#b3b3b3"></div>
<div class="abs" style="left:1412.200px;top:115px;width:1px;height:565px;background:#bdbdbd"></div>
<div class="abs" style="left:1413px;top:115px;width:22px;height:565px;background:#fcfcfc"></div>
<svg class="abs" style="left:1413px;top:115px" width="22" height="565" viewBox="0 0 22 565"><path d="M9.700 11.300L14.800 4.300l5.100 7z" fill="#858585"/><rect x="10.800" y="206.500" width="7.700" height="255" rx="3.800" fill="#858585"/><path d="M9.700 553.700h10.200L14.800 560.700z" fill="#858585"/></svg>
<svg class="abs" style="left:472px;top:113px" width="940" height="160" viewBox="472 113 940 160" font-family="Liberation Sans, sans-serif"><path d="M517.500 113V269.500H1067.500V113" fill="none" stroke="#a9bdd0" stroke-width="1"/><path d="M518.500 270.500H1068.500V113" fill="none" stroke="#e3e9ef" stroke-width="1"/><path d="M598.5 195.5H966" stroke="#e4e4e4" stroke-width="1"/><path d="M598.5 173.1H966" stroke="#e4e4e4" stroke-width="1"/><path d="M598.5 150.6H966" stroke="#e4e4e4" stroke-width="1"/><path d="M598.5 128.2H966" stroke="#e4e4e4" stroke-width="1"/><path d="M966 113V218" stroke="#ececec" stroke-width="1"/><path d="M597.5 207.900H966" stroke="#9bbb59" stroke-width="1.800"/><path d="M598.400 218.100L742.9 100" stroke="#c0504d" stroke-width="2"/><path d="M598 208.100L772.3 100" stroke="#4bacc6" stroke-width="2"/><path d="M598.5 113V220.5M595.5 218H966" stroke="#222" stroke-width="1.200" fill="none"/><path d="M595.5 218.0H598.5" stroke="#222" stroke-width="1"/><text x="593" y="221.6" text-anchor="end" font-size="12.200" font-weight="bold" fill="#3a3a3a">$0</text><path d="M595.5 195.5H598.5" stroke="#222" stroke-width="1"/><text x="593" y="199.1" text-anchor="end" font-size="12.200" font-weight="bold" fill="#3a3a3a">$10 000</text><path d="M595.5 173.1H598.5" stroke="#222" stroke-width="1"/><text x="593" y="176.7" text-anchor="end" font-size="12.200" font-weight="bold" fill="#3a3a3a">$20 000</text><path d="M595.5 150.6H598.5" stroke="#222" stroke-width="1"/><text x="593" y="154.2" text-anchor="end" font-size="12.200" font-weight="bold" fill="#3a3a3a">$30 000</text><path d="M595.5 128.2H598.5" stroke="#222" stroke-width="1"/><text x="593" y="131.8" text-anchor="end" font-size="12.200" font-weight="bold" fill="#3a3a3a">$40 000</text><path d="M598.5 218v3.500" stroke="#222" stroke-width="1"/><text transform="translate(612.4 222.500) rotate(-90)" text-anchor="end" font-size="12.600" font-weight="bold" fill="#3a3a3a">0</text><path d="M620.0 218v3.500" stroke="#222" stroke-width="1"/><text transform="translate(633.9 222.500) rotate(-90)" text-anchor="end" font-size="12.600" font-weight="bold" fill="#3a3a3a">250</text><path d="M641.6 218v3.500" stroke="#222" stroke-width="1"/><text transform="translate(655.4 222.500) rotate(-90)" text-anchor="end" font-size="12.600" font-weight="bold" fill="#3a3a3a">500</text><path d="M663.1 218v3.500" stroke="#222" stroke-width="1"/><text transform="translate(677.0 222.500) rotate(-90)" text-anchor="end" font-size="12.600" font-weight="bold" fill="#3a3a3a">750</text><path d="M684.7 218v3.500" stroke="#222" stroke-width="1"/><text transform="translate(698.5 222.500) rotate(-90)" text-anchor="end" font-size="12.600" font-weight="bold" fill="#3a3a3a">1000</text><path d="M706.2 218v3.500" stroke="#222" stroke-width="1"/><text transform="translate(720.1 222.500) rotate(-90)" text-anchor="end" font-size="12.600" font-weight="bold" fill="#3a3a3a">1250</text><path d="M727.7 218v3.500" stroke="#222" stroke-width="1"/><text transform="translate(741.6 222.500) rotate(-90)" text-anchor="end" font-size="12.600" font-weight="bold" fill="#3a3a3a">1500</text><path d="M749.3 218v3.500" stroke="#222" stroke-width="1"/><text transform="translate(763.1 222.500) rotate(-90)" text-anchor="end" font-size="12.600" font-weight="bold" fill="#3a3a3a">1750</text><path d="M770.8 218v3.500" stroke="#222" stroke-width="1"/><text transform="translate(784.7 222.500) rotate(-90)" text-anchor="end" font-size="12.600" font-weight="bold" fill="#3a3a3a">2000</text><path d="M792.4 218v3.500" stroke="#222" stroke-width="1"/><text transform="translate(806.2 222.500) rotate(-90)" text-anchor="end" font-size="12.600" font-weight="bold" fill="#3a3a3a">2250</text><path d="M813.9 218v3.500" stroke="#222" stroke-width="1"/><text transform="translate(827.8 222.500) rotate(-90)" text-anchor="end" font-size="12.600" font-weight="bold" fill="#3a3a3a">2500</text><path d="M835.4 218v3.500" stroke="#222" stroke-width="1"/><text transform="translate(849.3 222.500) rotate(-90)" text-anchor="end" font-size="12.600" font-weight="bold" fill="#3a3a3a">2750</text><path d="M857.0 218v3.500" stroke="#222" stroke-width="1"/><text transform="translate(870.8 222.500) rotate(-90)" text-anchor="end" font-size="12.600" font-weight="bold" fill="#3a3a3a">3000</text><path d="M878.5 218v3.500" stroke="#222" stroke-width="1"/><text transform="translate(892.4 222.500) rotate(-90)" text-anchor="end" font-size="12.600" font-weight="bold" fill="#3a3a3a">3250</text><path d="M900.1 218v3.500" stroke="#222" stroke-width="1"/><text transform="translate(913.9 222.500) rotate(-90)" text-anchor="end" font-size="12.600" font-weight="bold" fill="#3a3a3a">3500</text><path d="M921.6 218v3.500" stroke="#222" stroke-width="1"/><text transform="translate(935.5 222.500) rotate(-90)" text-anchor="end" font-size="12.600" font-weight="bold" fill="#3a3a3a">3750</text><path d="M943.1 218v3.500" stroke="#222" stroke-width="1"/><text transform="translate(957.0 222.500) rotate(-90)" text-anchor="end" font-size="12.600" font-weight="bold" fill="#3a3a3a">4000</text><path d="M964.7 218v3.500" stroke="#222" stroke-width="1"/></svg>
<div class="lbl" style="left:520px;width:162.500px;top:326.500px">Frais fixes :</div>
<div class="lbl" style="left:520px;width:162.500px;top:347.500px">Coûts variables unitaires :</div>
<div class="lbl" style="left:780px;width:109.500px;top:326.500px">Nombre d'unités :</div>
<div class="lbl" style="left:780px;width:109.500px;top:347.500px">Prix unitaires :</div>
<div class="fld" style="left:684px;top:321px;width:98px;height:22px;line-height:23px;padding-right:2px">4 500,00</div>
<div class="fld" style="left:684px;top:345px;width:98px;height:18px;line-height:15px;padding-right:1px;border:2px solid #111;border-radius:3px">25,00</div>
<div class="fld" style="left:891px;top:321px;width:97px;height:22px;line-height:23px;padding-right:3px">250</div>
<div class="fld" style="left:891px;top:342px;width:97px;height:21px;line-height:23px;padding-right:3px">33,00</div>
<div class="abs" style="left:509px;top:402.500px;width:573.500px;height:19.500px;background:#e6e6e6;border:1px solid #3a3a3a;box-shadow:inset 0 0 0 .5px #999"></div>
<div class="th" style="left:544.5px">Unités</div>
<div class="th" style="left:631.5px">Revenu net</div>
<div class="th" style="left:733px">Coûts fixes</div>
<div class="th" style="left:836.5px">Coûts variables</div>
<div class="th" style="left:939px">Coût total</div>
<div class="th" style="left:1035.5px">Profit net</div>
<div class="tr z" style="top:422.4px;height:16.800px"></div>
<div class="td" style="left:544.5px;top:426.0px">0</div>
<div class="td" style="left:631.5px;top:424.8px">$0</div>
<div class="td" style="left:733px;top:424.8px">$4 500</div>
<div class="td" style="left:836.5px;top:424.8px">$0</div>
<div class="td" style="left:939px;top:424.8px">$4 500</div>
<div class="td" style="left:1035.5px;top:424.8px">$-4 500</div>
<div class="td" style="left:544.5px;top:442.0px">250</div>
<div class="td" style="left:631.5px;top:442.0px">$8 250</div>
<div class="td" style="left:733px;top:442.0px">$4 500</div>
<div class="td" style="left:836.5px;top:442.0px">$6 250</div>
<div class="td" style="left:939px;top:442.0px">$10 750</div>
<div class="td" style="left:1035.5px;top:442.0px">$-2 500</div>
<div class="tr z" style="top:456.6px;height:16.800px"></div>
<div class="td" style="left:544.5px;top:459.2px">500</div>
<div class="td" style="left:631.5px;top:459.2px">$16 500</div>
<div class="td" style="left:733px;top:459.2px">$4 500</div>
<div class="td" style="left:836.5px;top:459.2px">$12 500</div>
<div class="td" style="left:939px;top:459.2px">$17 000</div>
<div class="td" style="left:1035.5px;top:459.2px">$-500</div>
<div class="td" style="left:544.5px;top:476.3px">750</div>
<div class="td" style="left:631.5px;top:476.3px">$24 750</div>
<div class="td" style="left:733px;top:476.3px">$4 500</div>
<div class="td" style="left:836.5px;top:476.3px">$18 750</div>
<div class="td" style="left:939px;top:476.3px">$23 250</div>
<div class="td" style="left:1035.5px;top:476.3px">$1 500</div>
<div class="tr z" style="top:490.8px;height:16.800px"></div>
<div class="td" style="left:544.5px;top:493.5px">1000</div>
<div class="td" style="left:631.5px;top:493.5px">$33 000</div>
<div class="td" style="left:733px;top:493.5px">$4 500</div>
<div class="td" style="left:836.5px;top:493.5px">$25 000</div>
<div class="td" style="left:939px;top:493.5px">$29 500</div>
<div class="td" style="left:1035.5px;top:493.5px">$3 500</div>
<div class="td" style="left:544.5px;top:510.7px">1250</div>
<div class="td" style="left:631.5px;top:510.7px">$41 250</div>
<div class="td" style="left:733px;top:510.7px">$4 500</div>
<div class="td" style="left:836.5px;top:510.7px">$31 250</div>
<div class="td" style="left:939px;top:510.7px">$35 750</div>
<div class="td" style="left:1035.5px;top:510.7px">$5 500</div>
<div class="tr z" style="top:525.1px;height:16.800px"></div>
<div class="td" style="left:544.5px;top:527.9px">1500</div>
<div class="td" style="left:631.5px;top:527.9px">$49 500</div>
<div class="td" style="left:733px;top:527.9px">$4 500</div>
<div class="td" style="left:836.5px;top:527.9px">$37 500</div>
<div class="td" style="left:939px;top:527.9px">$42 000</div>
<div class="td" style="left:1035.5px;top:527.9px">$7 500</div>
<div class="td" style="left:544.5px;top:545.1px">1750</div>
<div class="td" style="left:631.5px;top:545.1px">$57 750</div>
<div class="td" style="left:733px;top:545.1px">$4 500</div>
<div class="td" style="left:836.5px;top:545.1px">$43 750</div>
<div class="td" style="left:939px;top:545.1px">$48 250</div>
<div class="td" style="left:1035.5px;top:545.1px">$9 500</div>
<div class="tr z" style="top:559.3px;height:16.800px"></div>
<div class="td" style="left:544.5px;top:562.2px">2000</div>
<div class="td" style="left:631.5px;top:562.2px">$66 000</div>
<div class="td" style="left:733px;top:562.2px">$4 500</div>
<div class="td" style="left:836.5px;top:562.2px">$50 000</div>
<div class="td" style="left:939px;top:562.2px">$54 500</div>
<div class="td" style="left:1035.5px;top:562.2px">$11 500</div>
<div class="td" style="left:544.5px;top:579.4px">2250</div>
<div class="td" style="left:631.5px;top:579.4px">$74 250</div>
<div class="td" style="left:733px;top:579.4px">$4 500</div>
<div class="td" style="left:836.5px;top:579.4px">$56 250</div>
<div class="td" style="left:939px;top:579.4px">$60 750</div>
<div class="td" style="left:1035.5px;top:579.4px">$13 500</div>
<div class="tr z" style="top:593.5px;height:16.800px"></div>
<div class="td" style="left:544.5px;top:596.6px">2500</div>
<div class="td" style="left:631.5px;top:596.6px">$82 500</div>
<div class="td" style="left:733px;top:596.6px">$4 500</div>
<div class="td" style="left:836.5px;top:596.6px">$62 500</div>
<div class="td" style="left:939px;top:596.6px">$67 000</div>
<div class="td" style="left:1035.5px;top:596.6px">$15 500</div>
<div class="td" style="left:544.5px;top:613.8px">2750</div>
<div class="td" style="left:631.5px;top:613.8px">$90 750</div>
<div class="td" style="left:733px;top:613.8px">$4 500</div>
<div class="td" style="left:836.5px;top:613.8px">$68 750</div>
<div class="td" style="left:939px;top:613.8px">$73 250</div>
<div class="td" style="left:1035.5px;top:613.8px">$17 500</div>
<div class="tr z" style="top:627.7px;height:16.800px"></div>
<div class="td" style="left:544.5px;top:631.0px">3000</div>
<div class="td" style="left:631.5px;top:631.0px">$99 000</div>
<div class="td" style="left:733px;top:631.0px">$4 500</div>
<div class="td" style="left:836.5px;top:631.0px">$75 000</div>
<div class="td" style="left:939px;top:631.0px">$79 500</div>
<div class="td" style="left:1035.5px;top:631.0px">$19 500</div>
<div class="td" style="left:544.5px;top:648.4px">3250</div>
<div class="td" style="left:631.5px;top:648.4px">$107 250</div>
<div class="td" style="left:733px;top:648.4px">$4 500</div>
<div class="td" style="left:836.5px;top:648.4px">$81 250</div>
<div class="td" style="left:939px;top:648.4px">$85 750</div>
<div class="td" style="left:1035.5px;top:648.4px">$21 500</div>
<div class="tr z" style="top:661.9px;height:16.800px"></div>
<div class="td" style="left:544.5px;top:665.9px">3500</div>
<div class="td" style="left:631.5px;top:665.9px">$115 500</div>
<div class="td" style="left:733px;top:665.9px">$4 500</div>
<div class="td" style="left:836.5px;top:665.9px">$87 500</div>
<div class="td" style="left:939px;top:665.9px">$92 000</div>
<div class="td" style="left:1035.5px;top:665.9px">$23 500</div>
</body></html>
